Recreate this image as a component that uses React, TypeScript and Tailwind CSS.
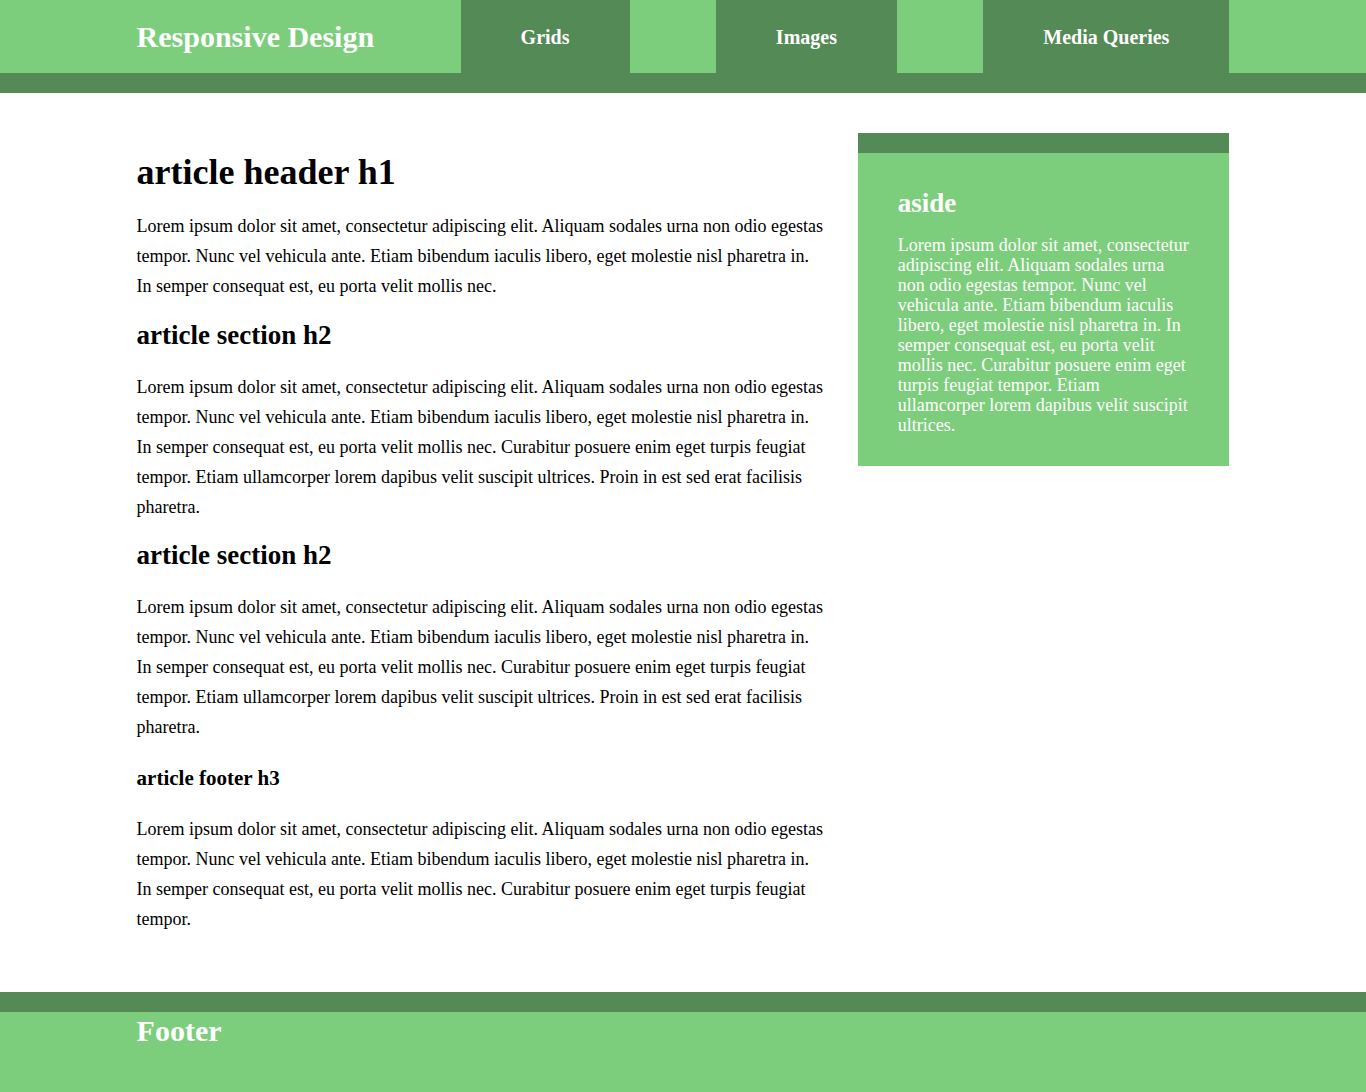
const lorem =
  "Lorem ipsum dolor sit amet, consectetur adipiscing elit. Aliquam sodales urna non odio egestas tempor. Nunc vel vehicula ante. Etiam bibendum iaculis libero, eget molestie nisl pharetra in. In semper consequat est, eu porta velit mollis nec.";
const loremLong =
  lorem +
  " Curabitur posuere enim eget turpis feugiat tempor. Etiam ullamcorper lorem dapibus velit suscipit ultrices. Proin in est sed erat facilisis pharetra.";
const loremFooter = lorem + " Curabitur posuere enim eget turpis feugiat tempor.";
const asideText =
  lorem + " Curabitur posuere enim eget turpis feugiat tempor. Etiam ullamcorper lorem dapibus velit suscipit ultrices.";

const navItems = ["Grids", "Images", "Media Queries"];

export default function App() {
  return (
    <div className="min-h-screen bg-white text-black font-['Liberation_Serif','Times_New_Roman',serif]">
      <header className="bg-[#7dce7c] border-b-[20px] border-[#548a55]">
        <div className="w-[80%] mx-auto flex items-stretch h-[73px]">
          <h1 className="w-[324px] flex items-center text-[30px] font-bold text-white">Responsive Design</h1>
          <nav className="flex-1 flex justify-between">
            {navItems.map((item) => (
              <a
                key={item}
                href="#"
                className="bg-[#548a55] px-[60px] flex items-center text-[20px] font-bold text-white"
              >
                {item}
              </a>
            ))}
          </nav>
        </div>
      </header>

      <main className="w-[80%] mx-auto flex justify-between items-start pt-[40px] pb-[58px]">
        <article className="w-[63%] text-[18px]">
          <h1 className="mt-[19px] text-[36px] font-bold leading-[41px]">article header h1</h1>
          <p className="mt-[18px] leading-[30px]">{lorem}</p>
          <section>
            <h2 className="mt-[19px] text-[27px] font-bold leading-[31px]">article section h2</h2>
            <p className="mt-[21px] leading-[30px]">{loremLong}</p>
          </section>
          <section>
            <h2 className="mt-[18px] text-[27px] font-bold leading-[31px]">article section h2</h2>
            <p className="mt-[21px] leading-[30px]">{loremLong}</p>
          </section>
          <footer>
            <h3 className="mt-[24px] text-[21px] font-bold leading-[24px]">article footer h3</h3>
            <p className="mt-[24px] leading-[30px]">{loremFooter}</p>
          </footer>
        </article>

        <aside className="w-[34%] bg-[#7dce7c] border-t-[20px] border-[#548a55] px-[40px] pt-[35px] pb-[31px] text-white">
          <h2 className="text-[27px] font-bold leading-[31px]">aside</h2>
          <p className="mt-[16px] text-[18px] leading-[20px]">{asideText}</p>
        </aside>
      </main>

      <footer className="bg-[#7dce7c] border-t-[20px] border-[#548a55] h-[100px]">
        <div className="w-[80%] mx-auto">
          <h2 className="pt-[1px] text-[30px] font-bold text-white leading-[35px]">Footer</h2>
        </div>
      </footer>
    </div>
  );
}
